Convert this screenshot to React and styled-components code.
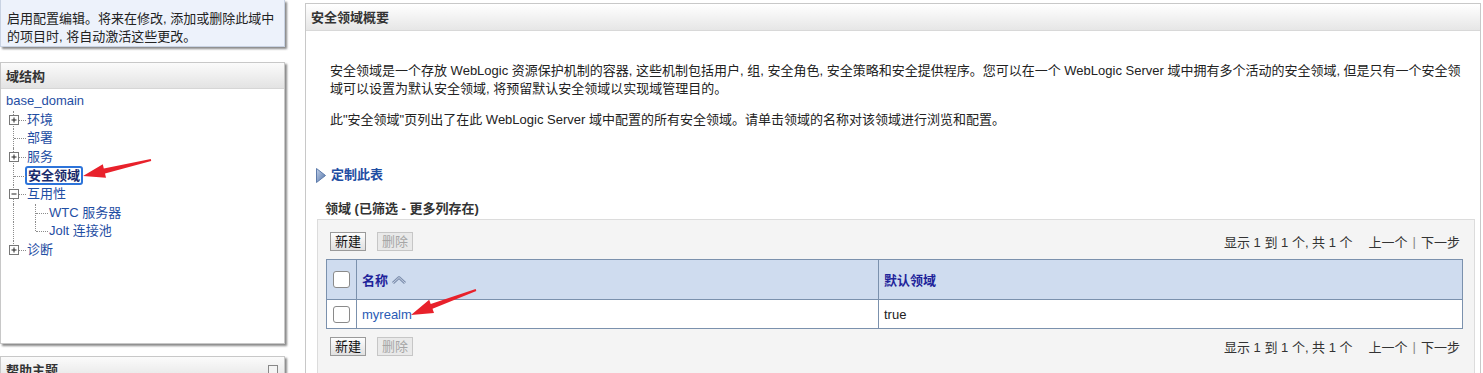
import React from 'react';
import styled, { createGlobalStyle } from 'styled-components';

const colors = {
  text: '#222',
  link: '#1f4ea3',
  header: '#333',
  border: '#c8c8c8',
  shadow: '#8a8a8a',
  tableBorder: '#7b91ad',
  tableHead: '#cfdcef',
  thText: '#1e239a',
  arrow: '#e8212b',
};

const GlobalStyle = createGlobalStyle`
  html, body {
    margin: 0;
    background: #fff;
  }
  body {
    font-family: "Liberation Sans", "Noto Sans CJK SC", sans-serif;
    font-size: 13px;
    color: ${colors.text};
  }
`;

const Page = styled.div`
  position: relative;
  display: flex;
  height: 373px;
  overflow: hidden;
`;

const LeftCol = styled.div`
  display: flex;
  flex-direction: column;
  width: 285px;
  flex-shrink: 0;
  margin-right: 20px;
`;

const ChangeBox = styled.div`
  box-sizing: border-box;
  height: 48px;
  padding: 10px 6px 0 6px;
  line-height: 18px;
  background: #edf2fb;
  border: 1px solid #c9d3e3;
  border-top: none;
  box-shadow: 2px 2px 2px ${colors.shadow};
`;

const Panel = styled.div`
  box-sizing: border-box;
  margin-top: ${p => p.$top}px;
  height: ${p => p.$height};
  border: 1px solid ${colors.border};
  background: #fff;
  box-shadow: 2px 2px 2px ${colors.shadow};
  flex-shrink: 0;
`;

const PanelHeader = styled.div`
  display: flex;
  justify-content: space-between;
  align-items: center;
  height: 25px;
  padding: 0 6px 0 5px;
  background: linear-gradient(#fbfbfb, #e3e3e3);
  border-bottom: 1px solid #d6d6d6;
  font-weight: bold;
  color: ${colors.header};
`;

const MiniSquare = styled.span`
  width: 8px;
  height: 8px;
  border: 1px solid #888;
  background: #f4f4f4;
`;

const Tree = styled.div`
  padding: 3px 0 0 4px;
`;

const TreeRow = styled.div`
  display: flex;
  align-items: center;
  height: 18.6px;
`;

const Gutter = styled.span`
  position: relative;
  flex-shrink: 0;
  width: 22px;
  height: 100%;
  &::before {
    content: '';
    position: absolute;
    left: 8px;
    top: 0;
    height: ${p => (p.$v === 'half' ? '50%' : p.$v === 'full' ? '100%' : '0')};
    border-left: 1px dotted #8c8c8c;
  }
  &::after {
    content: '';
    position: absolute;
    left: 9px;
    right: 1px;
    top: 50%;
    border-top: ${p => (p.$h ? '1px dotted #8c8c8c' : 'none')};
  }
`;

const Expander = styled.svg`
  position: absolute;
  left: 4px;
  top: 50%;
  margin-top: -5px;
  z-index: 1;
`;

const TreeLink = styled.span`
  color: ${colors.link};
  line-height: 18px;
  white-space: nowrap;
  padding-left: ${p => (p.$root ? '1px' : '0')};
`;

const SelectedLink = styled.span`
  margin-left: -2px;
  padding: 0 1px;
  line-height: 15px;
  font-weight: bold;
  color: #1a2a6c;
  border: 2px solid #2d74da;
  border-radius: 3px;
`;

const RightPanel = styled.div`
  flex: 1;
  display: flex;
  flex-direction: column;
  margin: 3px 2px 0 0;
  border: 1px solid ${colors.border};
  border-bottom: none;
`;

const RightHeader = styled.div`
  height: 26px;
  line-height: 28px;
  padding-left: 5px;
  background: linear-gradient(#ffffff, #e6e6e6);
  border-bottom: 1px solid #d8d8d8;
  font-weight: bold;
  color: ${colors.header};
`;

const Content = styled.div`
  padding: 31px 5px 0 10px;
`;

const Para = styled.p`
  margin: 0 0 ${p => p.$gap}px 14px;
  line-height: 18px;
  white-space: nowrap;
`;

const CustomizeLink = styled.div`
  display: flex;
  align-items: center;
  gap: 5px;
  margin-top: 37px;
  line-height: 18px;
  font-weight: bold;
  color: ${colors.link};
`;

const SectionTitle = styled.div`
  margin: 16px 0 1px 9px;
  line-height: 18px;
  font-weight: bold;
  color: ${colors.header};
`;

const TableBox = styled.div`
  margin-left: 1px;
  padding: 12px 11px 20px 8px;
  background: #f4f4f4;
  border: 1px solid #dcdcdc;
`;

const Toolbar = styled.div`
  display: flex;
  justify-content: space-between;
  align-items: center;
  height: 19px;
  padding: 0 3px 0 4px;
`;

const ButtonGroup = styled.div`
  display: flex;
  gap: 11px;
`;

const Btn = styled.button`
  box-sizing: border-box;
  height: 19px;
  padding: 0 4px;
  font: inherit;
  line-height: 17px;
  color: ${p => (p.disabled ? '#a6a6a6' : '#111')};
  background: ${p => (p.disabled ? '#e9e9e9' : 'linear-gradient(#fdfdfd, #e0e0e0)')};
  border: 1px solid ${p => (p.disabled ? '#c6c6c6' : '#9a9a9a')};
  border-radius: 0;
`;

const Pager = styled.div`
  display: flex;
  align-items: center;
  color: #333;
  white-space: nowrap;
`;

const PagerNav = styled.span`
  margin-left: 16px;
`;

const Sep = styled.span`
  margin: 0 5px;
  color: #888;
`;

const Table = styled.table`
  width: 100%;
  margin: 8px 0;
  border-collapse: collapse;
  border: 1px solid ${colors.tableBorder};
`;

const Th = styled.th`
  box-sizing: border-box;
  height: 40px;
  width: ${p => p.$w || 'auto'};
  padding: 0 5px;
  text-align: left;
  background: ${colors.tableHead};
  color: ${colors.thText};
  font-weight: bold;
  border-right: 1px solid ${colors.tableBorder};
  border-bottom: 1px solid ${colors.tableBorder};
`;

const Td = styled.td`
  height: 28px;
  padding: 0 5px;
  background: #fff;
  border-right: 1px solid ${colors.tableBorder};
`;

const CheckCell = styled.div`
  display: flex;
  justify-content: center;
`;

const Checkbox = styled.span`
  width: 15px;
  height: 15px;
  border: 1px solid #8a8a8a;
  border-radius: 3px;
  background: #fff;
`;

const HeadLabel = styled.span`
  display: inline-flex;
  align-items: center;
  gap: 3px;
`;

const RealmLink = styled.span`
  color: #2a5bb5;
`;

const Overlay = styled.svg`
  position: absolute;
  left: 0;
  top: 0;
  pointer-events: none;
`;

const Plus = ({ minus }) => (
  <Expander width="10" height="10" viewBox="0 0 10 10">
    <rect x="0.5" y="0.5" width="9" height="9" fill="#fff" stroke="#777" />
    <path d="M2.5 5h5" stroke="#222" />
    {!minus && <path d="M5 2.5v5" stroke="#222" />}
  </Expander>
);

const Triangle = () => (
  <svg width="10" height="15" viewBox="0 0 10 15">
    <defs>
      <linearGradient id="tri" x1="0" y1="0" x2="1" y2="1">
        <stop offset="0" stopColor="#c5d3ea" />
        <stop offset="1" stopColor="#4d6fa5" />
      </linearGradient>
    </defs>
    <polygon points="0.5,0.5 9.5,7.5 0.5,14.5" fill="url(#tri)" stroke="#5d7bab" />
  </svg>
);

const SortIcon = () => (
  <svg width="16" height="12" viewBox="0 0 16 12">
    <path d="M2 9 L8 3.5 L14 9" fill="none" stroke="#7d8fae" strokeWidth="3" strokeLinejoin="round" />
    <path d="M2 9 L8 3.5 L14 9" fill="none" stroke="#c7d2e4" strokeWidth="1" strokeLinejoin="round" />
  </svg>
);

const Arrow = ({ points }) => <polygon points={points} fill={colors.arrow} />;

const Pagination = () => (
  <Pager>
    显示 1 到 1 个, 共 1 个
    <PagerNav>上一个</PagerNav>
    <Sep>|</Sep>
    下一步
  </Pager>
);

const Buttons = () => (
  <ButtonGroup>
    <Btn>新建</Btn>
    <Btn disabled>删除</Btn>
  </ButtonGroup>
);

export default function App () {
  return (
    <Page>
      <GlobalStyle />
      <LeftCol>
        <ChangeBox>
          启用配置编辑。将来在修改, 添加或删除此域中<br />
          的项目时, 将自动激活这些更改。
        </ChangeBox>

        <Panel $top={15} $height="282px">
          <PanelHeader>域结构</PanelHeader>
          <Tree>
            <TreeRow><TreeLink $root>base_domain</TreeLink></TreeRow>
            <TreeRow><Gutter $v="full" $h><Plus /></Gutter><TreeLink>环境</TreeLink></TreeRow>
            <TreeRow><Gutter $v="full" $h /><TreeLink>部署</TreeLink></TreeRow>
            <TreeRow><Gutter $v="full" $h><Plus /></Gutter><TreeLink>服务</TreeLink></TreeRow>
            <TreeRow><Gutter $v="full" $h /><SelectedLink>安全领域</SelectedLink></TreeRow>
            <TreeRow><Gutter $v="full" $h><Plus minus /></Gutter><TreeLink>互用性</TreeLink></TreeRow>
            <TreeRow><Gutter $v="full" /><Gutter $v="full" $h /><TreeLink>WTC 服务器</TreeLink></TreeRow>
            <TreeRow><Gutter $v="full" /><Gutter $v="half" $h /><TreeLink>Jolt 连接池</TreeLink></TreeRow>
            <TreeRow><Gutter $v="half" $h><Plus /></Gutter><TreeLink>诊断</TreeLink></TreeRow>
          </Tree>
        </Panel>

        <Panel $top={12} $height="60px">
          <PanelHeader>帮助主题<MiniSquare /></PanelHeader>
        </Panel>
      </LeftCol>

      <RightPanel>
        <RightHeader>安全领域概要</RightHeader>
        <Content>
          <Para $gap={13}>
            安全领域是一个存放 WebLogic 资源保护机制的容器, 这些机制包括用户, 组, 安全角色, 安全策略和安全提供程序。您可以在一个 WebLogic Server 域中拥有多个活动的安全领域, 但是只有一个安全领<br />
            域可以设置为默认安全领域, 将预留默认安全领域以实现域管理目的。
          </Para>
          <Para $gap={0}>
            此"安全领域"页列出了在此 WebLogic Server 域中配置的所有安全领域。请单击领域的名称对该领域进行浏览和配置。
          </Para>

          <CustomizeLink><Triangle />定制此表</CustomizeLink>
          <SectionTitle>领域 (已筛选 - 更多列存在)</SectionTitle>

          <TableBox>
            <Toolbar>
              <Buttons />
              <Pagination />
            </Toolbar>
            <Table>
              <thead>
                <tr>
                  <Th $w="30px"><CheckCell><Checkbox /></CheckCell></Th>
                  <Th $w="522px"><HeadLabel>名称<SortIcon /></HeadLabel></Th>
                  <Th>默认领域</Th>
                </tr>
              </thead>
              <tbody>
                <tr>
                  <Td><CheckCell><Checkbox /></CheckCell></Td>
                  <Td><RealmLink>myrealm</RealmLink></Td>
                  <Td>true</Td>
                </tr>
              </tbody>
            </Table>
            <Toolbar>
              <Buttons />
              <Pagination />
            </Toolbar>
          </TableBox>
        </Content>
      </RightPanel>

      <Overlay width="1483" height="373">
        <Arrow points="83,176 106,177.8 105,173.4 151.2,161 150.8,159 103.8,168.5 102.8,164.2" />
        <Arrow points="411,315 434,313 432.5,308.7 476.3,290.9 475.7,289.1 430.7,304.1 429.2,299.8" />
      </Overlay>
    </Page>
  );
}
